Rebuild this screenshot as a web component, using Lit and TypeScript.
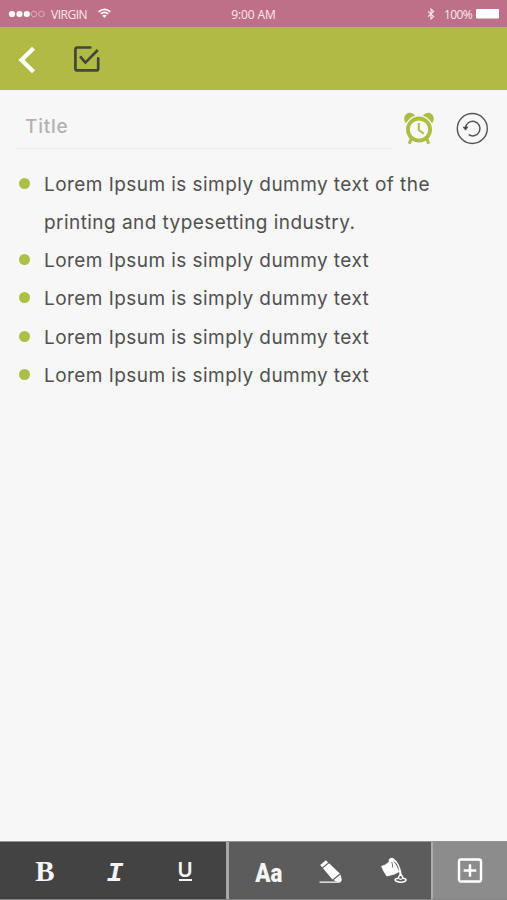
import { LitElement, html, css, svg } from "lit";
import { customElement } from "lit/decorators.js";

const ITEMS: string[][] = [
  ["Lorem Ipsum is simply dummy text of the", "printing and typesetting industry."],
  ["Lorem Ipsum is simply dummy text"],
  ["Lorem Ipsum is simply dummy text"],
  ["Lorem Ipsum is simply dummy text"],
  ["Lorem Ipsum is simply dummy text"],
];

@customElement("status-bar")
class StatusBar extends LitElement {
  static styles = css`
    :host { display: grid; grid-template-columns: 1fr auto 1fr; align-items: center; height: 27px; box-sizing: border-box; padding: 0 8px 0 8px; background: #bd7087; color: #fbe9ee; font: 12px/27px "Open Sans", sans-serif; letter-spacing: -0.1px; }
    .left, .right { display: flex; align-items: center; }
    .right { justify-content: flex-end; }
    .carrier { width: 37px; margin-left: 6px; letter-spacing: -0.5px; padding-top: 1px; }
    .time { padding-top: 1px; }
    .wifi { margin-left: 10px; margin-top: -1px; }
    .level { margin: 1px 4px 0 9px; letter-spacing: -0.6px; }
    svg { display: block; }
  `;
  render() {
    return html`
      <div class="left">
        <svg width="37" height="10" viewBox="0 0 37 10">
          ${[4, 11.5, 18.8].map((x) => svg`<circle cx=${x} cy="5" r="3.1" fill="#fff"/>`)}
          ${[26, 33.5].map((x) => svg`<circle cx=${x} cy="5" r="2.8" fill="none" stroke="#e5b8c5" stroke-width=".8"/>`)}
        </svg>
        <span class="carrier">VIRGIN</span>
        <svg class="wifi" width="13" height="11" viewBox="0 0 13 11" fill="none" stroke="#fff" stroke-width="1.6">
          <path d="M.6 3.8Q6.5-1.2 12.4 3.8M2.8 6Q6.5 2.8 10.2 6"/><path d="M4.4 7.7Q6.5 6 8.6 7.7L6.5 10Z" fill="#fff" stroke="none"/>
        </svg>
      </div>
      <span class="time">9:00 AM</span>
      <div class="right">
        <svg width="8" height="12" viewBox="0 0 8 12" fill="none" stroke="#fbe9ee" stroke-width="1.1"><path d="M1 3.3 6.6 8.6 4 11V1L6.6 3.4 1 8.7"/></svg>
        <span class="level">100%</span>
        <svg width="23" height="10" viewBox="0 0 23 10"><rect width="23" height="9.5" rx="1" fill="#fff"/></svg>
      </div>
    `;
  }
}

@customElement("app-header")
class AppHeader extends LitElement {
  static styles = css`
    :host { display: flex; align-items: center; height: 63px; box-sizing: border-box; padding-left: 18px; background: #b0bb45; gap: 37px; }
    .back { margin-top: 3px; }
    svg { display: block; }
  `;
  render() {
    return html`
      <svg class="back" width="18" height="28" viewBox="0 0 18 28" fill="none" stroke="#fff" stroke-width="4.2"><path d="M15.5 2.2 3.5 14 15.5 25.8"/></svg>
      <svg width="28" height="28" viewBox="0 0 28 28" fill="none" stroke="#45463a" stroke-width="2.7" stroke-linecap="round" stroke-linejoin="round">
        <path d="M17.3 2.5H4.4Q2.4 2.5 2.4 4.5V23.4Q2.4 25.4 4.4 25.4H23.2Q25.2 25.4 25.2 23.4V13.3"/><path d="M7.1 11.4 12.4 17.6 24.8 5" stroke-linecap="butt" stroke-linejoin="miter"/>
      </svg>
    `;
  }
}

@customElement("title-row")
class TitleRow extends LitElement {
  static styles = css`
    :host { display: flex; height: 75px; box-sizing: border-box; padding: 17px 17px 0 16px; }
    .field { width: 376px; height: 42px; box-sizing: border-box; padding-left: 9px; border-bottom: 1px solid #ebebeb; color: #b2b2b2; font: 500 19px/40px Inter, sans-serif; letter-spacing: 0.75px; }
    .alarm { margin: 4px 0 0 11px; }
    .undo { margin: 4px 0 0 21px; }
    svg { display: block; flex: none; }
  `;
  render() {
    return html`
      <div class="field">Title</div>
      <svg class="alarm" width="32" height="34" viewBox="0 0 32 34">
        <g fill="#adbd42"><path d="M2.9 12.2C-1 7.5 2.4 1.6 7.2 1.8Q10.6 2.1 12.4 4.9Z"/><path d="M29.1 12.2C33 7.5 29.6 1.6 24.8 1.8Q21.4 2.1 19.6 4.9Z"/></g>
        <g fill="none" stroke="#adbd42"><circle cx="16" cy="18.6" r="13.6" stroke="#f7f7f7" stroke-width="1.4"/><circle cx="16" cy="18.6" r="11.1" stroke-width="3.8"/><path d="M8.2 27.5 6.3 32.8M23.8 27.5 25.7 32.8" stroke-width="3"/><path d="M15.8 12V19L20.8 22.8" stroke-width="2"/></g>
      </svg>
      <svg class="undo" width="33" height="34" viewBox="0 0 33 34" fill="none" stroke="#555">
        <circle cx="16.3" cy="17.5" r="15" stroke-width="1.4"/><path d="M9.4 17.2A7.3 7.3 0 1 1 12.7 23.7" stroke-width="1.5"/><path d="M7 16 12 16 9.5 19.2Z" fill="#444" stroke="#444" stroke-width=".5"/>
      </svg>
    `;
  }
}

@customElement("note-list")
class NoteList extends LitElement {
  static styles = css`
    :host { display: block; flex: 1; padding-top: 1px; color: #505050; font: 19px/38px Inter, sans-serif; letter-spacing: 0.44px; }
    ul { list-style: none; margin: 0; padding: 0 0 0 19px; }
    li { display: flex; gap: 14px; }
    li:nth-child(3) { padding-bottom: 1px; }
    .dot { flex: none; width: 11px; height: 11px; margin-top: 12px; border-radius: 50%; background: #adbf47; }
    .line { display: block; white-space: nowrap; }
  `;
  render() {
    return html`<ul>${ITEMS.map((lines) => html`<li><span class="dot"></span><div>${lines.map((l) => html`<span class="line">${l}</span>`)}</div></li>`)}</ul>`;
  }
}

@customElement("format-bar")
class FormatBar extends LitElement {
  static styles = css`
    :host { display: flex; height: 59px; box-sizing: border-box; border-top: 1px solid #929292; border-bottom: 1px solid #858585; color: #f5f5f5; }
    .group { display: grid; align-items: center; justify-items: center; box-sizing: border-box; }
    .style { width: 229px; border-right: 3px solid #a9a9a9; padding: 0 6px 0 10px; background: #434343; grid-template-columns: repeat(3, 1fr); }
    .tools { width: 204px; border-right: 2px solid #adadad; padding: 0 6px 0 8px; background: #5c5c5c; grid-template-columns: repeat(3, 1fr); }
    .add { flex: 1; background: #8c8c8c; padding-right: 1px; }
    .b { font: bold 29px/30px "Liberation Serif", serif; }
    .i { font: italic bold 28px/30px "Liberation Mono", monospace; padding-top: 7px; }
    .u { font: 600 20.5px/18px Inter, sans-serif; border-bottom: 2px solid #f5f5f5; width: 13px; display: flex; justify-content: center; }
    .aa { font: 900 26px/30px Roboto, sans-serif; transform: scaleX(.86); padding-top: 5px; }
    .erase { margin-top: 3px; }
    svg { display: block; }
  `;
  render() {
    return html`
      <div class="group style"><span class="b">B</span><span class="i">I</span><span class="u">U</span></div>
      <div class="group tools">
        <span class="aa">Aa</span>
        <svg class="erase" width="24" height="24" viewBox="0 0 24 24" fill="#fff">
          <path d="M1.2 4.9 6.9.3 9.1 2.4 3.2 7.4Z"/><path d="M4 8.3 10.1 3.3 20.8 13.4 13.4 19.6Z"/><path d="M14.7 20.1 21.6 14.5 22.8 20.5 21.2 22.2 17.5 21.8Z"/><path d="M.5 21.5H17L22 22.8H.5Z"/>
        </svg>
        <svg width="26" height="27" viewBox="0 0 26 27" fill="none" stroke="#fff" stroke-linejoin="round">
          <path d="M.6 9.3Q4 9 8.2 4.8L10.3 2.1Q15 7 17.8 14.8L13 17.2 5.8 19Q2.2 14 .6 9.3Z" fill="#fff" stroke-width=".8"/><path d="M8 4Q9 .9 12 1.7Q18.2 5.5 20.4 18.8M8 4Q13.7.4 18 10.2L19.3 18.6" stroke-width="1.3"/><path d="M10.8 5Q12 8.5 11.5 10.5" stroke="#777" stroke-width="1"/><path d="M19.3 17.5Q17.5 19.5 17.3 21.2C12.5 21.4 13 24.7 19 25.2 26.8 25.5 26 21.2 22 21.2Q21.7 18.5 19.3 17.5Z" stroke-width="1.5"/><path d="M17.3 21.2Q19.4 23.4 22 21.2" stroke-width="1.1"/>
        </svg>
      </div>
      <div class="group add">
        <svg width="26" height="26" viewBox="0 0 26 26" fill="none" stroke="#fff" stroke-width="2.4"><rect x="2" y="1.5" width="22" height="22" rx="1.8"/><path d="M13 6.2V18.8M6.7 12.5H19.3"/></svg>
      </div>
    `;
  }
}

@customElement("app-root")
class AppRoot extends LitElement {
  static styles = css`
    :host { display: flex; flex-direction: column; width: 507px; height: 900px; background: #f7f7f7; overflow: hidden; }
  `;
  render() {
    return html`<status-bar></status-bar><app-header></app-header><title-row></title-row><note-list></note-list><format-bar></format-bar>`;
  }
}
